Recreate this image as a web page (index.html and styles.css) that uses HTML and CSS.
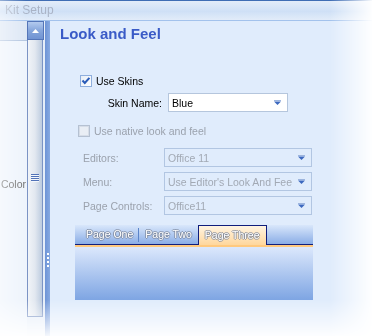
FILE: index.html
```html
<!DOCTYPE html>
<html lang="en">
<head>
  <meta charset="UTF-8">
  <title>Kit Setup</title>
  <link rel="stylesheet" href="styles.css">
</head>
<body>
  <div class="window">
    <div class="titlebar">Kit Setup</div>
    <div class="main">

      <!-- property list, scrolled off to the left -->
      <div class="side">
        <div class="side-head"></div>
        <div class="side-body">Color</div>
      </div>

      <div class="scrollbar">
        <div class="sb-up">
          <svg width="7" height="4" viewBox="0 0 7 4"><path d="M0 4h7L3.5 0z" fill="#fff"/></svg>
        </div>
        <div class="sb-thumb"><div class="sb-grip"></div></div>
      </div>

      <div class="splitter"><div class="split-grip"></div></div>

      <!-- Look and Feel page -->
      <div class="content">
        <h1>Look and Feel</h1>

        <div class="check-row">
          <span class="check">
            <svg width="10" height="10" viewBox="0 0 10 10"><path d="M1.5 4.5l2.3 2.5 4.6-5.2" stroke="#2b5cb8" stroke-width="2" fill="none"/></svg>
          </span>
          Use Skins
        </div>

        <div class="field skin">
          <span class="field-label">Skin Name:</span>
          <div class="combo">
            <span class="combo-text">Blue</span>
            <svg width="7" height="5" viewBox="0 0 7 5"><rect width="7" height="1" fill="#9db5de"/><path d="M0 1.5h7L3.5 5z" fill="#3c68bf"/></svg>
          </div>
        </div>

        <div class="check-row disabled">
          <span class="check"></span>
          Use native look and feel
        </div>

        <div class="opts">
          <div class="field">
            <span class="field-label">Editors:</span>
            <div class="combo">
              <span class="combo-text">Office 11</span>
              <svg width="7" height="5" viewBox="0 0 7 5"><rect width="7" height="1" fill="#9db5de"/><path d="M0 1.5h7L3.5 5z" fill="#3c68bf"/></svg>
            </div>
          </div>
          <div class="field">
            <span class="field-label">Menu:</span>
            <div class="combo">
              <span class="combo-text">Use Editor's Look And Fee</span>
              <svg width="7" height="5" viewBox="0 0 7 5"><rect width="7" height="1" fill="#9db5de"/><path d="M0 1.5h7L3.5 5z" fill="#3c68bf"/></svg>
            </div>
          </div>
          <div class="field">
            <span class="field-label">Page Controls:</span>
            <div class="combo">
              <span class="combo-text">Office11</span>
              <svg width="7" height="5" viewBox="0 0 7 5"><rect width="7" height="1" fill="#9db5de"/><path d="M0 1.5h7L3.5 5z" fill="#3c68bf"/></svg>
            </div>
          </div>
        </div>

        <div class="tabs">
          <div class="tab-strip">
            <span class="tab first">Page One</span>
            <span class="tab-sep"></span>
            <span class="tab second">Page Two</span>
            <span class="tab active">Page Three</span>
          </div>
          <div class="tab-line"></div>
          <div class="tab-page"></div>
        </div>
      </div>

    </div>
  </div>
</body>
</html>
```

FILE: styles.css
```css
body {
  margin: 0;
  background-color: #fff;
  font-family: "Liberation Sans", Arial, sans-serif;
  font-size: 10.5px;
  color: #000;
}
.window {
  width: 372px;
  height: 336px;
  display: flex;
  flex-direction: column;
  overflow: hidden;
  -webkit-mask-image: linear-gradient(to right, rgba(0,0,0,.55), #000 26px, #000 330px, rgba(0,0,0,.04)), linear-gradient(#000 300px, rgba(0,0,0,.08));
  -webkit-mask-composite: source-in;
  mask-image: linear-gradient(to right, rgba(0,0,0,.55), #000 26px, #000 330px, rgba(0,0,0,.04)), linear-gradient(#000 300px, rgba(0,0,0,.08));
  mask-composite: intersect;
}
.titlebar {
  height: 19px;
  line-height: 19px;
  padding-left: 5px;
  border-top: 1px solid #3f6db4;
  border-bottom: 1px solid #a3c2ec;
  background: linear-gradient(#e3ecf9, #cfe0f6 55%, #e2ecf9);
  color: #a9b3c6;
  font-size: 12px;
}
.main {
  flex: 1;
  display: flex;
  background-color: #e6eef9;
}

/* left list */
.side {
  width: 27px;
  display: flex;
  flex-direction: column;
}
.side-head {
  height: 19px;
  border-bottom: 1px solid #b3c6e0;
  background-color: #dde7f5;
}
.side-body {
  flex: 1;
  padding: 136px 1px 0 0;
  background-color: #eef4fc;
  line-height: 14px;
  text-align: right;
  color: #6c6c6c;
  white-space: nowrap;
  overflow: hidden;
}

/* scrollbar */
.scrollbar {
  width: 17px;
  display: flex;
  flex-direction: column;
}
.sb-up {
  height: 17px;
  border: 1px solid #5475b8;
  background: linear-gradient(#b3caef, #86a6dc 50%, #7093d2);
  display: flex;
  align-items: center;
  justify-content: center;
}
.sb-thumb {
  flex: 1;
  margin: 0 1px 19px 0;
  border: 1px solid #7b93c4;
  border-top: none;
  background: linear-gradient(to right, #f1f4f8, #e2e8f0 50%, #bccbdf);
  display: flex;
  align-items: center;
  justify-content: center;
}
.sb-grip {
  width: 8px;
  height: 8px;
  background: repeating-linear-gradient(#5273b8 0 1px, #f4f7fb 1px 2px);
}

/* splitter */
.splitter {
  width: 5px;
  margin-left: 1px;
  background: linear-gradient(to right, #6e94d6, #87a9e1);
}
.split-grip {
  width: 2px;
  height: 14px;
  margin: 232px 0 0 2px;
  background: repeating-linear-gradient(#fff 0 2px, transparent 2px 4px);
}

/* page */
.content {
  flex: 1;
  padding-top: 4px;
  background-color: #e0ecfc;
}
h1 {
  margin: 0 0 0 10px;
  font-size: 15px;
  line-height: 18px;
  font-weight: bold;
  color: #3a5bc7;
}
.check-row {
  display: flex;
  align-items: center;
  gap: 4px;
  height: 13px;
  margin: 31px 0 0 30px;
}
.check {
  width: 12px;
  height: 12px;
  box-sizing: border-box;
  border: 1px solid #8eaedd;
  background: linear-gradient(135deg, #e6edf6, #fff);
  display: flex;
  align-items: center;
  justify-content: center;
}
.check-row.disabled {
  margin: 12px 0 0 28px;
  color: #9ba2ad;
}
.check-row.disabled .check {
  border-color: #b5c1d2;
  background: #e9eef5;
  box-shadow: inset 0 0 0 1px #d6dde8;
}
.field {
  display: flex;
  align-items: center;
  height: 19px;
}
.field-label {
  width: 112px;
  margin-right: 6px;
  text-align: right;
}
.skin {
  margin-top: 6px;
}
.combo {
  width: 120px;
  height: 19px;
  box-sizing: border-box;
  border: 1px solid #b5c6dd;
  background-color: #fff;
  padding: 0 6px 0 3px;
  display: flex;
  align-items: center;
  gap: 4px;
}
.combo-text {
  flex: 1;
  white-space: nowrap;
}
.opts {
  display: flex;
  flex-direction: column;
  gap: 5px;
  margin: 11px 0 0 33px;
}
.opts .field-label {
  width: 81px;
  margin: 0;
  text-align: left;
  color: #9ba2ad;
}
.opts .combo {
  width: 148px;
  background-color: transparent;
  border-color: #b2c6e2;
  color: #a2a9b4;
}

/* tab control */
.tabs {
  width: 238px;
  margin: 10px 0 0 25px;
}
.tab-strip {
  height: 19px;
  padding-left: 6px;
  border-bottom: 1px solid #101e7c;
  background: linear-gradient(#d9e7fb, #8aade6);
  display: flex;
  align-items: flex-end;
}
.tab {
  height: 19px;
  line-height: 19px;
  padding: 0 5px;
  color: #fff;
  white-space: nowrap;
  text-shadow: -1px 0 0 rgba(120,130,150,.7), 1px 0 0 rgba(120,130,150,.7), 0 -1px 0 rgba(120,130,150,.7), 0 1px 0 rgba(120,130,150,.7);
}
.tab.second {
  padding: 0 6px 0 6px;
}
.tab-sep {
  width: 1px;
  height: 14px;
  align-self: center;
  background-color: #5b84c9;
}
.tab.active {
  position: relative;
  height: 19px;
  margin-bottom: -1px;
  padding: 0 6px;
  border: 1px solid #101e7c;
  border-bottom: none;
  background: linear-gradient(#fff4e2, #ffd79c);
}
.tab-line {
  height: 2px;
  background-color: #ffc97e;
}
.tab-page {
  height: 53px;
  background: linear-gradient(#dce8fc, #7ea5e3);
}
```
